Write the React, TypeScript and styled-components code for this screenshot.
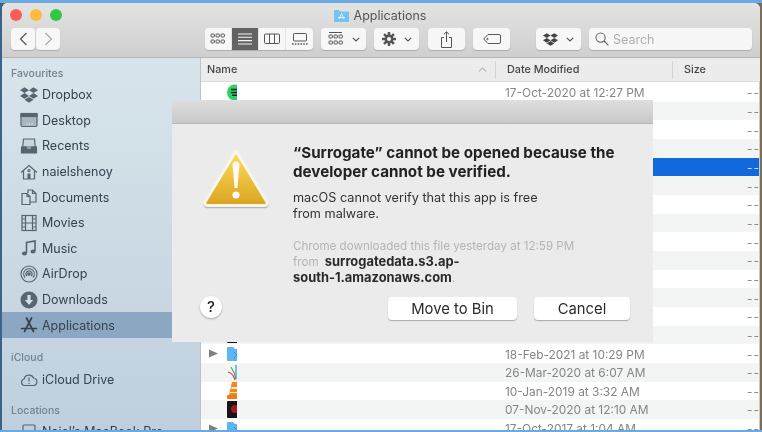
import React from 'react';
import styled, { createGlobalStyle } from 'styled-components';
import { FaDropbox } from 'react-icons/fa';

const Global = createGlobalStyle`
  html, body { margin: 0; padding: 0; width: 762px; height: 432px; overflow: hidden; }
  body { font-family: Inter, "Liberation Sans", sans-serif; }
`;

const Screen = styled.div`
  width: 762px;
  height: 432px;
  box-sizing: border-box;
  padding: 3px 2px 2px 2px;
  background:
    linear-gradient(#6aa9e2 0 3px, transparent 3px),
    linear-gradient(to top, #6aa9e2 0 2px, transparent 2px),
    linear-gradient(90deg, #3b6288 0 3px, #7d6d55 3px) 0 0 / 100% 100%;
  background-color: #7d6d55;
  overflow: hidden;
  filter: blur(0.4px);
`;

const Win = styled.div`
  position: relative;
  height: 100%;
  display: flex;
  flex-direction: column;
  border-radius: 6px 6px 0 0;
  overflow: hidden;
  background: #fff;
`;

const TitleBar = styled.div`
  flex: none;
  height: 55px;
  box-sizing: border-box;
  border-bottom: 1px solid #b4b4b4;
  background: linear-gradient(#e3e3e3, #cfcfcf);
  display: flex;
  flex-direction: column;
`;

const TitleRow = styled.div`
  position: relative;
  height: 25px;
  flex: none;
  display: flex;
  align-items: center;
  justify-content: center;
  gap: 5px;
  padding-right: 2px;
  font-size: 12.5px;
  color: #555;
`;

const Lights = styled.div`
  position: absolute;
  left: 8px;
  top: 6px;
  display: flex;
  gap: 8px;
`;

const Light = styled.span<{ $c: string }>`
  width: 12px;
  height: 12px;
  border-radius: 50%;
  background: ${(p) => p.$c};
`;

const Tools = styled.div`
  display: flex;
  align-items: center;
  height: 22px;
  padding-left: 9px;
`;

const Btn = styled.div<{ $w: number; $ml?: number }>`
  width: ${(p) => p.$w}px;
  height: 22px;
  margin-left: ${(p) => p.$ml ?? 0}px;
  flex: none;
  box-sizing: border-box;
  display: flex;
  align-items: center;
  justify-content: center;
  gap: 8px;
  background: #f7f7f7;
  border-radius: 4px;
  box-shadow: 0 1px 1px rgba(0, 0, 0, 0.18);
  color: #555;
`;

const Segment = styled.div`
  display: flex;
  margin-left: 145px;
  height: 22px;
  border-radius: 4px;
  overflow: hidden;
  box-shadow: 0 1px 1px rgba(0, 0, 0, 0.18);
`;

const Seg = styled.div<{ $on?: boolean }>`
  width: 27px;
  display: flex;
  align-items: center;
  justify-content: center;
  background: ${(p) => (p.$on ? '#636363' : '#f7f7f7')};
  color: ${(p) => (p.$on ? '#f5f5f5' : '#555')};
  border-right: 1px solid #e2e2e2;
  box-sizing: border-box;
  &:last-child { border-right: none; }
`;

const Search = styled(Btn)`
  justify-content: flex-start;
  padding-left: 6px;
  gap: 4px;
  font-size: 12.5px;
  color: #b0b0b0;
`;

const Body = styled.div`
  flex: 1;
  min-height: 0;
  display: flex;
`;

const Sidebar = styled.div`
  flex: none;
  width: 199px;
  padding-top: 7px;
  box-sizing: border-box;
  background: linear-gradient(#d8e5eb, #bfcfdd);
  border-right: 1px solid #b9c3cb;
  color: #36424e;
  overflow: hidden;
`;

const SideHead = styled.div<{ $mt?: number; $mb?: number }>`
  height: 17px;
  line-height: 17px;
  padding-left: 9px;
  margin-top: ${(p) => p.$mt ?? 0}px;
  margin-bottom: ${(p) => p.$mb ?? 0}px;
  font-size: 10.5px;
  font-weight: 500;
  color: #75828d;
`;

const SideItem = styled.div<{ $on?: boolean }>`
  height: 25.6px;
  display: flex;
  align-items: center;
  gap: 4px;
  padding-left: 18px;
  font-size: 12.5px;
  white-space: nowrap;
  background: ${(p) => (p.$on ? '#8ba7c2' : 'transparent')};
  svg { flex: none; color: ${(p) => (p.$on ? '#35424f' : '#58646f')}; }
`;

const Main = styled.div`
  flex: 1;
  min-width: 0;
  display: flex;
  flex-direction: column;
`;

const HeadRow = styled.div`
  flex: none;
  height: 24px;
  box-sizing: border-box;
  display: flex;
  align-items: center;
  background: #ececec;
  border-bottom: 1px solid #dcdcdc;
  font-size: 10.8px;
  font-weight: 500;
  color: #444;
`;

const HeadCell = styled.div<{ $w: number; $line?: boolean }>`
  width: ${(p) => p.$w}px;
  flex: none;
  height: 18px;
  display: flex;
  align-items: center;
  justify-content: space-between;
  box-sizing: border-box;
  padding: 0 6px 0 11px;
  border-right: ${(p) => (p.$line ? '1px solid #d4d4d4' : 'none')};
`;

const HeadName = styled(HeadCell)`
  padding-left: 6px;
  padding-right: 8px;
`;

const Rows = styled.div`
  flex: 1;
  min-height: 0;
  padding-top: 1px;
  overflow: hidden;
  border-right: 1px solid #c9c9c9;
`;

const Row = styled.div<{ $i: number; $sel?: boolean }>`
  height: 18.67px;
  display: flex;
  align-items: center;
  font-size: 11.9px;
  color: #858585;
  background: ${(p) => (p.$sel ? '#1269dc' : p.$i % 2 ? '#f3f4f4' : '#fff')};
`;

const NameCell = styled.div`
  width: 304px;
  flex: none;
  display: flex;
  align-items: center;
  padding-left: 8px;
  box-sizing: border-box;
  height: 100%;
`;

const Tri = styled.span<{ $show?: boolean }>`
  width: 16px;
  flex: none;
  svg { display: ${(p) => (p.$show ? 'block' : 'none')}; }
`;

const Clip = styled.span`
  width: 11px;
  height: 17px;
  flex: none;
  overflow: hidden;
  display: block;
  margin-left: 1px;
`;

const DateCell = styled.div`
  width: 242px;
  flex: none;
  padding-top: 1px;
  white-space: nowrap;
`;

const Dash = styled.div<{ $sel?: boolean }>`
  flex: none;
  padding-top: 1px;
  white-space: nowrap;
  color: ${(p) => (p.$sel ? '#cfe0f8' : '#888')};
  letter-spacing: 1px;
`;

const Dialog = styled.div`
  position: absolute;
  left: 170px;
  top: 97px;
  width: 481px;
  height: 242px;
  background: #ebebeb;
  display: flex;
  flex-direction: column;
`;

const DialogBar = styled.div`
  flex: none;
  height: 24px;
  box-sizing: border-box;
  background: linear-gradient(#dedede, #c9c9c9);
  border-bottom: 1px solid #b7b7b7;
`;

const DialogMain = styled.div`
  flex: 1;
  display: grid;
  grid-template-columns: 121px 1fr;
  padding-top: 19px;
`;

const IconCol = styled.div`
  padding: 4px 0 0 30px;
`;

const Heading = styled.div`
  font-size: 15.2px;
  line-height: 19px;
  font-weight: 700;
  color: #222;
  white-space: nowrap;
`;

const Msg = styled.div`
  margin-top: 9px;
  font-size: 12.7px;
  line-height: 16px;
  color: #333;
`;

const Note = styled.div`
  margin-top: 16px;
  font-size: 11.6px;
  line-height: 16px;
  color: #b4b4b4;
  white-space: nowrap;
  b { font-size: 12.9px; font-weight: 700; color: #2a2a2a; }
`;

const From = styled.span`
  margin-right: 3px;
`;

const DialogFoot = styled.div`
  flex: none;
  display: flex;
  align-items: center;
  height: 23px;
  margin-bottom: 22px;
  padding-left: 28px;
`;

const Help = styled.div`
  width: 22px;
  height: 22px;
  margin-bottom: 4px;
  border-radius: 50%;
  background: #fff;
  box-shadow: 0 1px 2px rgba(0, 0, 0, 0.3);
  display: flex;
  align-items: center;
  justify-content: center;
  font-size: 15px;
  font-weight: 500;
  color: #222;
`;

const DlgBtn = styled.div<{ $w: number; $ml: number }>`
  width: ${(p) => p.$w}px;
  margin-left: ${(p) => p.$ml}px;
  height: 23px;
  border-radius: 4px;
  background: #fff;
  box-shadow: 0 1px 1px rgba(0, 0, 0, 0.28);
  display: flex;
  align-items: center;
  justify-content: center;
  font-size: 14.8px;
  color: #2b2b2b;
`;

type IP = { s?: number };

const Svg = ({ s = 18, children }: IP & { children: React.ReactNode }) => (
  <svg width={s} height={s} viewBox="0 0 18 18" fill="none" stroke="currentColor" strokeWidth="1.2">
    {children}
  </svg>
);

const DesktopIcon = () => (
  <Svg>
    <rect x="1" y="2.5" width="16" height="13" rx="1.5" fill="#a9b5bf" />
    <rect x="1" y="2.5" width="16" height="3" fill="currentColor" />
    <path d="M6.5 13h1M9 13h1M11.5 13h1" stroke="#fff" />
  </Svg>
);
const RecentsIcon = () => (
  <Svg>
    <path d="M3.5 2h11l.8 8H2.7z" fill="#c8d3dc" />
    <path d="M1.5 10h4.5l1 2h4l1-2h4.5v6h-15z" fill="currentColor" />
  </Svg>
);
const HomeIcon = () => (
  <Svg>
    <path d="M1 9.5 9 2.5l8 7M3.5 8v8h11V8" />
    <rect x="7.5" y="10.5" width="3" height="5.5" fill="currentColor" stroke="none" />
    <circle cx="9" cy="7.5" r="1" />
  </Svg>
);
const DocsIcon = () => (
  <Svg>
    <path d="M2 5.5h5l3 3v8H2z" />
    <path d="M8 5V2h4.5L16 5.5V14h-6" />
    <path d="M12.5 2v3.5H16M7 5.5v3h3" />
  </Svg>
);
const MoviesIcon = () => (
  <Svg>
    <rect x="2" y="1.5" width="14" height="15" />
    <path d="M5.5 1.5v15M12.5 1.5v15M5.5 9h7M2 5h3.5M2 9h3.5M2 13h3.5M12.5 5H16M12.5 9H16M12.5 13H16" />
  </Svg>
);
const MusicIcon = () => (
  <Svg>
    <path d="M6.5 14V3.5l8.5-1.5V12" strokeWidth="1.6" />
    <ellipse cx="4.5" cy="14.5" rx="2.5" ry="2" fill="currentColor" stroke="none" />
    <ellipse cx="13" cy="12.5" rx="2.5" ry="2" fill="currentColor" stroke="none" />
  </Svg>
);
const AirDropIcon = () => (
  <Svg>
    <circle cx="9" cy="9" r="8" />
    <path d="M5 12.5a5.3 5.3 0 1 1 8 0M6.8 11a3 3 0 1 1 4.4 0" />
    <circle cx="9" cy="9" r="1.2" fill="currentColor" />
  </Svg>
);
const DownloadsIcon = () => (
  <Svg>
    <circle cx="9" cy="9" r="8.5" fill="currentColor" stroke="none" />
    <path d="M7.4 4h3.2v5h2.6L9 14 4.8 9h2.6z" fill="#d2dee6" stroke="none" />
  </Svg>
);
const AppsIcon = () => (
  <Svg>
    <path d="M6.5 2 13.5 15.5M11.5 2 4.5 15.5M1.5 12.5h15" strokeWidth="1.7" strokeLinecap="round" />
  </Svg>
);
const CloudIcon = () => (
  <Svg>
    <path d="M4.5 14.5a3.3 3.3 0 0 1-.4-6.5 5 5 0 0 1 9.4-1 3.8 3.8 0 0 1 .2 7.5z" />
    <path d="M9 6.5v4M9 12v.9" />
  </Svg>
);
const LaptopIcon = () => (
  <Svg>
    <rect x="3" y="3" width="12" height="9" rx="1" />
    <path d="M1 14h16" strokeWidth="1.6" />
  </Svg>
);

const GridIcon = ({ top }: { top?: boolean }) => (
  <svg width="16" height={top ? 14 : 12} viewBox={top ? '0 0 16 14' : '0 0 16 12'} fill="none" stroke="currentColor" strokeWidth="1">
    {top && <path d="M1 .5h13" />}
    {[1, 6, 11].map((x) =>
      [top ? 3 : 1, top ? 9 : 7].map((y) => <rect key={`${x}${y}`} x={x} y={y} width="3.4" height="3" rx=".8" />),
    )}
  </svg>
);
const ListIcon = () => (
  <svg width="16" height="12" viewBox="0 0 16 12" stroke="currentColor" strokeWidth="1.1">
    <path d="M1 1h14M1 4.3h14M1 7.6h14M1 11h14" />
  </svg>
);
const ColumnsIcon = () => (
  <svg width="16" height="12" viewBox="0 0 16 12" fill="none" stroke="currentColor" strokeWidth="1">
    <rect x=".5" y="1" width="15" height="9.5" rx="1" />
    <path d="M5.5 1v9.5M10.5 1v9.5" />
  </svg>
);
const GalleryIcon = () => (
  <svg width="16" height="12" viewBox="0 0 16 12" fill="none" stroke="currentColor" strokeWidth="1">
    <rect x="1.5" y=".5" width="13" height="7.5" rx=".8" />
    <path d="M0 11h16" strokeDasharray="1.6 1.2" strokeWidth="1.4" />
  </svg>
);
const Chevron = ({ dir }: { dir: 'l' | 'r' | 'd' }) => (
  <svg
    width={dir === 'd' ? 8 : 9}
    height={dir === 'd' ? 5 : 14}
    viewBox={dir === 'd' ? '0 0 8 5' : '0 0 9 14'}
    fill="none"
    stroke={dir === 'r' ? '#a8a8a8' : 'currentColor'}
    strokeWidth="1.2"
  >
    <path d={dir === 'l' ? 'M7.5 1 1.5 7l6 6' : dir === 'r' ? 'M1.5 1l6 6-6 6' : 'M.8.8 4 4 7.2.8'} />
  </svg>
);
const Gear = () => (
  <svg width="14" height="14" viewBox="0 0 14 14" fill="#555">
    <circle cx="7" cy="7" r="3.2" fill="none" stroke="#555" strokeWidth="2.4" />
    {[0, 45, 90, 135].map((a) => (
      <rect key={a} x="5.7" y="0" width="2.6" height="14" rx=".4" transform={`rotate(${a} 7 7)`} />
    ))}
    <circle cx="7" cy="7" r="2" fill="#f7f7f7" />
  </svg>
);
const Share = () => (
  <svg width="13" height="17" viewBox="0 0 13 17" fill="none" stroke="currentColor" strokeWidth="1">
    <path d="M4 6.5H1.5v10h10v-10H9M6.5 11V1M4 3.2 6.5.8 9 3.2" />
  </svg>
);
const Tag = () => (
  <svg width="18" height="10" viewBox="0 0 18 10" fill="none" stroke="currentColor" strokeWidth="1">
    <path d="M5 .5h11a1.5 1.5 0 0 1 1.5 1.5v6A1.5 1.5 0 0 1 16 9.5H5L.7 5z" />
    <circle cx="4.5" cy="5" r=".7" />
  </svg>
);
const Lens = () => (
  <svg width="14" height="14" viewBox="0 0 14 14" fill="none" stroke="#666" strokeWidth="1.1">
    <circle cx="5.6" cy="5.6" r="4.6" />
    <path d="M9 9l4.4 4.4" />
  </svg>
);
const AppFolder = () => (
  <svg width="15" height="13" viewBox="0 0 15 13">
    <path d="M0 2a1 1 0 0 1 1-1h4l1.4 1.5H15V12a1 1 0 0 1-1 1H1a1 1 0 0 1-1-1z" fill="#74c3f2" />
    <path d="M7.5 4.5 5 10M7.5 4.5 10 10M4 8.6h7" stroke="#e3f3fd" strokeWidth="1" fill="none" />
  </svg>
);
const Warning = () => (
  <svg width="68" height="62" viewBox="0 0 68 62">
    <defs>
      <linearGradient id="warn" x1="0" y1="0" x2="0" y2="1">
        <stop offset="0" stopColor="#fde05a" />
        <stop offset="1" stopColor="#dba321" />
      </linearGradient>
    </defs>
    <path d="M34 4 65 55a2.5 2.5 0 0 1-2 3.6H5A2.5 2.5 0 0 1 3 55z" fill="#b9b6ab" stroke="#b9b6ab" strokeWidth="3" strokeLinejoin="round" transform="translate(0 1.2)" />
    <path d="M34 4 65 55a2.5 2.5 0 0 1-2 3.6H5A2.5 2.5 0 0 1 3 55z" fill="url(#warn)" stroke="#f8f6ee" strokeWidth="3" strokeLinejoin="round" />
    <path d="M30.5 18a3.5 3.5 0 0 1 7 0L35.4 41h-2.8z" fill="#fbfbf6" />
    <circle cx="34" cy="48" r="3.6" fill="#fbfbf6" />
  </svg>
);
const TriIcon = () => (
  <svg width="9" height="9" viewBox="0 0 9 9">
    <path d="M0 .5 9 4.5 0 8.5z" fill="#808080" />
  </svg>
);

const FolderFile = ({ c = '#5cb6f2' }: { c?: string }) => (
  <svg width="22" height="17" viewBox="0 0 22 17">
    <path d="M1 3a1 1 0 0 1 1-1h5l2 2h11a1 1 0 0 1 1 1v10a1 1 0 0 1-1 1H2a1 1 0 0 1-1-1z" fill={c} />
    <path d="M8 7l3 3-3 3" stroke="#3a8fd0" fill="none" />
  </svg>
);
const Spotify = () => (
  <svg width="22" height="17" viewBox="0 0 22 17">
    <circle cx="9" cy="8.5" r="8" fill="#2ed15f" />
    <path d="M5 5.5h9M5 8.5h8M6 11.3h6" stroke="#123" strokeWidth="1.4" />
  </svg>
);
const Fan = () => (
  <svg width="22" height="17" viewBox="0 0 22 17" fill="none" strokeWidth="1.2">
    <path d="M2 8c3 1 6 4 7 8" stroke="#e23b4a" />
    <path d="M5 3c2 3 4 7 5 12" stroke="#46b04a" />
    <path d="M10 1v14" stroke="#3d8ed8" />
  </svg>
);
const Cone = () => (
  <svg width="22" height="17" viewBox="0 0 22 17">
    <path d="M6 0h5l3 13H3z" fill="#f08a1d" />
    <path d="M6 5h5v2H5zM4 10h10v1H4z" fill="#fbe9d3" />
    <rect x="1" y="13" width="16" height="4" rx="1" fill="#ee7b12" />
  </svg>
);
const Poster = () => (
  <svg width="22" height="17" viewBox="0 0 22 17">
    <rect x="1" y="0" width="16" height="17" rx="1" fill="#1b1214" />
    <circle cx="9" cy="8" r="4" fill="#a11a22" />
  </svg>
);

const rows: { date?: string; icon?: React.ReactNode; tri?: boolean; sel?: boolean }[] = [
  { date: '17-Oct-2020 at 12:27 PM', icon: <Spotify /> },
  {}, {}, {},
  { sel: true },
  {}, {}, {}, {}, {}, {}, {}, {},
  { icon: <Poster /> },
  { date: '18-Feb-2021 at 10:29 PM', icon: <FolderFile />, tri: true },
  { date: '26-Mar-2020 at 6:07 AM', icon: <Fan /> },
  { date: '10-Jan-2019 at 3:32 AM', icon: <Cone /> },
  { date: '07-Nov-2020 at 12:10 AM', icon: <Poster /> },
  { date: '17-Oct-2017 at 1:04 AM', icon: <FolderFile />, tri: true },
];

const favourites: [string, React.ReactNode, boolean?][] = [
  ['Dropbox', <FaDropbox size={18} />],
  ['Desktop', <DesktopIcon />],
  ['Recents', <RecentsIcon />],
  ['naielshenoy', <HomeIcon />],
  ['Documents', <DocsIcon />],
  ['Movies', <MoviesIcon />],
  ['Music', <MusicIcon />],
  ['AirDrop', <AirDropIcon />],
  ['Downloads', <DownloadsIcon />],
  ['Applications', <AppsIcon />, true],
];

export default function App() {
  return (
    <>
      <Global />
      <Screen>
        <Win>
          <TitleBar>
            <TitleRow>
              <Lights>
                <Light $c="#fc5d57" />
                <Light $c="#fdbc40" />
                <Light $c="#33c748" />
              </Lights>
              <AppFolder />
              Applications
            </TitleRow>
            <Tools>
              <Btn $w={24}><Chevron dir="l" /></Btn>
              <Btn $w={24} $ml={1}><Chevron dir="r" /></Btn>
              <Segment>
                <Seg><GridIcon /></Seg>
                <Seg $on><ListIcon /></Seg>
                <Seg><ColumnsIcon /></Seg>
                <Seg><GalleryIcon /></Seg>
              </Segment>
              <Btn $w={45} $ml={8}><GridIcon top /><Chevron dir="d" /></Btn>
              <Btn $w={45} $ml={8}><Gear /><Chevron dir="d" /></Btn>
              <Btn $w={37} $ml={9}><Share /></Btn>
              <Btn $w={37} $ml={8}><Tag /></Btn>
              <Btn $w={45} $ml={26}><FaDropbox size={15} color="#444" /><Chevron dir="d" /></Btn>
              <Search $w={163} $ml={8}><Lens />Search</Search>
            </Tools>
          </TitleBar>
          <Body>
            <Sidebar>
              <SideHead>Favourites</SideHead>
              {favourites.map(([label, icon, on]) => (
                <SideItem key={label} $on={on}>{icon}{label}</SideItem>
              ))}
              <SideHead $mt={11} $mb={1}>iCloud</SideHead>
              <SideItem><CloudIcon />iCloud Drive</SideItem>
              <SideHead $mt={9}>Locations</SideHead>
              <SideItem><LaptopIcon />Naiel’s MacBook Pro</SideItem>
            </Sidebar>
            <Main>
              <HeadRow>
                <HeadName $w={295} $line>
                  Name
                  <svg width="9" height="5" viewBox="0 0 9 5" fill="none" stroke="#999"><path d="M.8 4.5 4.5 1l3.7 3.5" /></svg>
                </HeadName>
                <HeadCell $w={177} $line>Date Modified</HeadCell>
                <HeadCell $w={80}>Size</HeadCell>
              </HeadRow>
              <Rows>
                {rows.map((r, i) => (
                  <Row key={i} $i={i} $sel={r.sel}>
                    <NameCell>
                      <Tri $show={r.tri}><TriIcon /></Tri>
                      <Clip>{r.icon}</Clip>
                    </NameCell>
                    <DateCell>{r.date}</DateCell>
                    <Dash $sel={r.sel}>--</Dash>
                  </Row>
                ))}
              </Rows>
            </Main>
          </Body>
          <Dialog>
            <DialogBar />
            <DialogMain>
              <IconCol><Warning /></IconCol>
              <div>
                <Heading>“Surrogate” cannot be opened because the<br />developer cannot be verified.</Heading>
                <Msg>macOS cannot verify that this app is free<br />from malware.</Msg>
                <Note>
                  Chrome downloaded this file yesterday at 12:59 PM<br />
                  <From>from</From> <b>surrogatedata.s3.ap-</b><br />
                  <b>south-1.amazonaws.com</b>.
                </Note>
              </div>
            </DialogMain>
            <DialogFoot>
              <Help>?</Help>
              <DlgBtn $w={129} $ml={166}>Move to Bin</DlgBtn>
              <DlgBtn $w={96} $ml={17}>Cancel</DlgBtn>
            </DialogFoot>
          </Dialog>
        </Win>
      </Screen>
    </>
  );
}
